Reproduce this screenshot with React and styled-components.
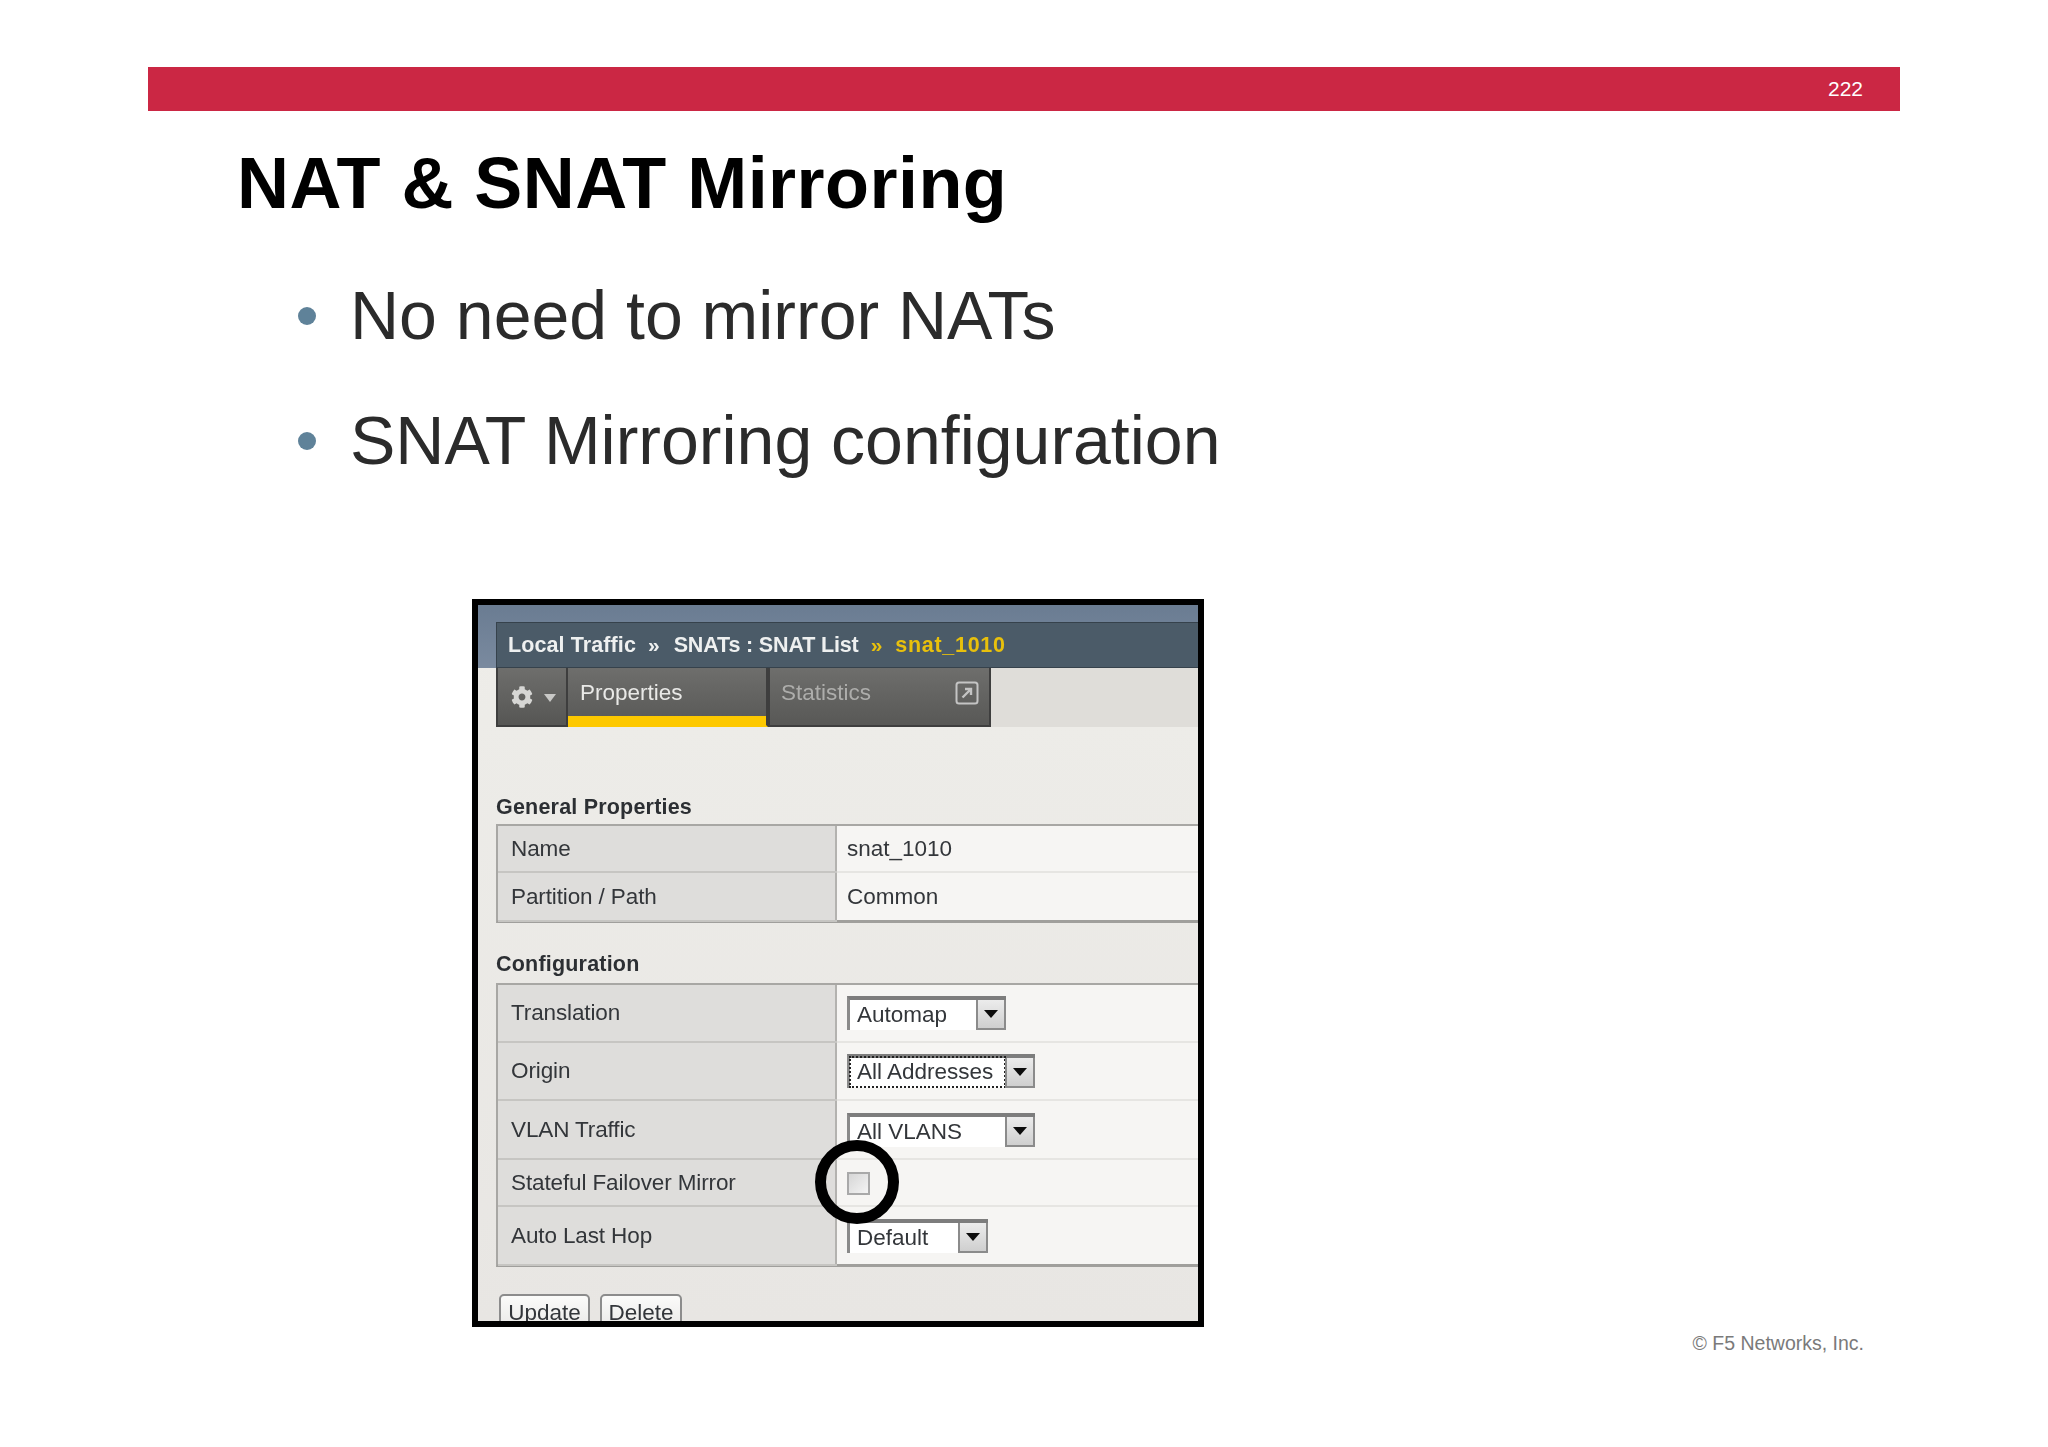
import React from "react";
import styled, { createGlobalStyle } from "styled-components";
import { FaCog } from "react-icons/fa";

const GlobalStyle = createGlobalStyle`
  html, body {
    margin: 0;
    padding: 0;
    background: #ffffff;
  }
  * {
    box-sizing: border-box;
  }
`;

const generalRows = [
  { label: "Name", value: "snat_1010", height: 47 },
  { label: "Partition / Path", value: "Common", height: 47 },
];

function App() {
  return (
    <Slide>
      <GlobalStyle />
      <TopBar>222</TopBar>
      <Title>NAT &amp; SNAT Mirroring</Title>
      <BulletList>
        <li>No need to mirror NATs</li>
        <li>SNAT Mirroring configuration</li>
      </BulletList>
      <BottomRow>
        <Panel>
          <TopBand>
            <Breadcrumb>
              <Crumb $spacing={0.1}>Local Traffic</Crumb>
              <Sep>»</Sep>
              <Crumb $spacing={-0.15}>SNATs : SNAT List</Crumb>
              <Current>
                <Sep>»</Sep>
                <Crumb $spacing={0.7}>snat_1010</Crumb>
              </Current>
            </Breadcrumb>
          </TopBand>
          <TabRow>
            <GearTab>
              <FaCog size={22} color="#d6d6d4" />
              <Caret />
            </GearTab>
            <Tab $width={200} $active>
              Properties
            </Tab>
            <Tab $width={223}>
              Statistics
              <svg width="24" height="24" viewBox="0 0 24 24" fill="none">
                <rect x="1.5" y="1.5" width="21" height="21" rx="2.5" stroke="#c4c4c4" strokeWidth="2" />
                <path d="M7.5 16.5 L15 9 M10 8 H16 V14" stroke="#c4c4c4" strokeWidth="2.4" />
              </svg>
            </Tab>
          </TabRow>

          <SectionTitle $top={68} $bottom={5}>
            General Properties
          </SectionTitle>
          <PropTable>
            {generalRows.map((row) => (
              <Row key={row.label} $height={row.height}>
                <Label>{row.label}</Label>
                <Value>{row.value}</Value>
              </Row>
            ))}
          </PropTable>

          <SectionTitle $top={29} $bottom={7}>
            Configuration
          </SectionTitle>
          <PropTable>
            <Row $height={58}>
              <Label>Translation</Label>
              <Value>
                <Select $width={159}>
                  <SelectText>Automap</SelectText>
                  <ArrowButton />
                </Select>
              </Value>
            </Row>
            <Row $height={58}>
              <Label>Origin</Label>
              <Value>
                <Select $width={188}>
                  <SelectText $focused>All Addresses</SelectText>
                  <ArrowButton />
                </Select>
              </Value>
            </Row>
            <Row $height={59}>
              <Label>VLAN Traffic</Label>
              <Value>
                <Select $width={188}>
                  <SelectText>All VLANS</SelectText>
                  <ArrowButton />
                </Select>
              </Value>
            </Row>
            <Row $height={47}>
              <Label>Stateful Failover Mirror</Label>
              <Value>
                <CheckWrap>
                  <CheckBox />
                  <Ring />
                </CheckWrap>
              </Value>
            </Row>
            <Row $height={57}>
              <Label>Auto Last Hop</Label>
              <Value>
                <Select $width={141}>
                  <SelectText>Default</SelectText>
                  <ArrowButton />
                </Select>
              </Value>
            </Row>
          </PropTable>

          <ButtonRow>
            <Button $width={91}>Update</Button>
            <Button $width={82}>Delete</Button>
          </ButtonRow>
        </Panel>
        <Footer>© F5 Networks, Inc.</Footer>
      </BottomRow>
    </Slide>
  );
}

export default App;

const Slide = styled.div`
  width: 2048px;
  height: 1447px;
  padding-top: 67px;
  overflow: hidden;
  background: #ffffff;
  font-family: "Liberation Sans", Arial, sans-serif;
`;

const TopBar = styled.div`
  width: 1752px;
  height: 44px;
  margin-left: 148px;
  padding-right: 37px;
  display: flex;
  align-items: center;
  justify-content: flex-end;
  background: #cb2744;
  color: #ffffff;
  font-size: 21px;
`;

const Title = styled.h1`
  margin: 32px 0 0 237px;
  font-size: 72px;
  line-height: 80px;
  letter-spacing: 0.45px;
  font-weight: 700;
  color: #000000;
`;

const BulletList = styled.ul`
  margin: 30px 0 0;
  padding: 0 0 0 298px;
  list-style: none;
  font-size: 68px;
  line-height: 125px;
  color: #2b2b2b;

  li {
    display: flex;
    align-items: center;
    gap: 34px;
  }
  li::before {
    content: "";
    width: 18px;
    height: 18px;
    border-radius: 50%;
    background: #5f8299;
  }
`;

const BottomRow = styled.div`
  height: 756px;
  margin-top: 96px;
  padding: 0 184px 0 472px;
  display: flex;
`;

const Panel = styled.div`
  width: 732px;
  height: 728px;
  flex-shrink: 0;
  border: 6px solid #000000;
  overflow: hidden;
  background: linear-gradient(#eeede9, #e8e6e3);
  filter: blur(0.45px);
  color: #33363a;
  font-size: 22.5px;
`;

const TopBand = styled.div`
  height: 63px;
  padding: 17px 0 0 18px;
  background: linear-gradient(#6a7c92, #7a8a9f);
`;

const Breadcrumb = styled.div`
  height: 46px;
  padding-left: 11px;
  display: flex;
  align-items: center;
  gap: 12px;
  background: #4b5b68;
  border: 1.5px solid #36424c;
  border-right: 0;
  color: #eef0f0;
  font-weight: 700;
  font-size: 21.5px;
`;

const Crumb = styled.span`
  letter-spacing: ${(p) => p.$spacing}px;
`;

const Sep = styled.span`
  font-size: 21px;
  letter-spacing: 2px;
`;

const Current = styled.span`
  display: flex;
  gap: 11px;
  color: #e8c00c;
`;

const TabRow = styled.div`
  height: 59px;
  margin-left: 18px;
  display: flex;
  background: #dfddd9;
`;

const GearTab = styled.div`
  width: 72px;
  padding-left: 13px;
  display: flex;
  align-items: center;
  gap: 11px;
  background: linear-gradient(#6e6e6c, #565654);
  border: 2px solid #3e3e3e;
  border-top: 0;
`;

const Caret = styled.span`
  width: 0;
  height: 0;
  margin-top: 2px;
  border-left: 6.5px solid transparent;
  border-right: 6.5px solid transparent;
  border-top: 8px solid #c8c8c6;
`;

const Tab = styled.div`
  width: ${(p) => p.$width}px;
  padding: 0 10px 7px ${(p) => (p.$active ? 12 : 11)}px;
  display: flex;
  align-items: center;
  justify-content: space-between;
  background: linear-gradient(#6e6e6c, #585856);
  border: 2px solid #3e3e3e;
  border-top: 0;
  border-left-width: ${(p) => (p.$active ? 0 : 2)}px;
  border-bottom-color: ${(p) => (p.$active ? "#fdc800" : "#3e3e3e")};
  box-shadow: ${(p) => (p.$active ? "inset 0 -9px 0 #fdc800" : "none")};
  color: ${(p) => (p.$active ? "#e9e9e7" : "#adadab")};
  font-size: 22.5px;
`;

const SectionTitle = styled.div`
  height: 24px;
  margin: ${(p) => p.$top}px 0 ${(p) => p.$bottom}px 18px;
  line-height: 24px;
  font-weight: 700;
  font-size: 21.5px;
  letter-spacing: 0.2px;
  color: #2c2f33;
`;

const PropTable = styled.div`
  margin-left: 18px;
  border-top: 2px solid #a8a7a4;
  border-bottom: 3px solid #a09f9c;
  border-left: 2px solid #a8a7a4;
`;

const Row = styled.div`
  height: ${(p) => p.$height}px;
  display: grid;
  grid-template-columns: 339px 1fr;
  border-bottom: 2px solid #e6e5e2;

  &:last-child {
    border-bottom: 0;
  }
`;

const Label = styled.div`
  padding-left: 13px;
  display: flex;
  align-items: center;
  background: #dedddb;
  border-right: 2px solid #b3b2af;
  box-shadow: 0 2px 0 #c6c5c2;
  letter-spacing: -0.12px;
`;

const Value = styled.div`
  padding-left: 10px;
  display: flex;
  align-items: center;
  background: #f6f5f3;
`;

const Select = styled.div`
  width: ${(p) => p.$width}px;
  height: 34px;
  display: flex;
  justify-content: space-between;
  background: #ffffff;
  border-top: 4px solid #7d7d7d;
  border-left: 3px solid #8a8a8a;
`;

const SelectText = styled.div`
  flex: 1;
  margin: ${(p) => (p.$focused ? "0 1px 2px 1px" : "0")};
  padding-left: ${(p) => (p.$focused ? 6 : 7)}px;
  display: flex;
  align-items: center;
  white-space: nowrap;
  outline: ${(p) => (p.$focused ? "2px dotted #222222" : "none")};
`;

const ArrowButton = styled.div`
  width: 30px;
  flex-shrink: 0;
  display: flex;
  align-items: center;
  justify-content: center;
  background: linear-gradient(#ececec, #cfcfcf);
  border: 2px solid #8b8b8b;
  border-top: 0;

  &::after {
    content: "";
    width: 0;
    height: 0;
    border-left: 7px solid transparent;
    border-right: 7px solid transparent;
    border-top: 8px solid #0c0c0c;
  }
`;

const CheckWrap = styled.div`
  position: relative;
  margin-top: 1px;
`;

const CheckBox = styled.div`
  width: 23px;
  height: 23px;
  background: linear-gradient(135deg, #d6d6d6, #f4f4f4);
  border: 2px solid #a9a9a9;
`;

/* hand drawn annotation over the screenshot */
const Ring = styled.div`
  position: absolute;
  left: -32px;
  top: -32px;
  width: 84px;
  height: 84px;
  border: 11px solid #000000;
  border-radius: 50%;
`;

const ButtonRow = styled.div`
  margin: 27px 0 0 21px;
  display: flex;
  gap: 10px;
`;

const Button = styled.div`
  width: ${(p) => p.$width}px;
  height: 38px;
  display: flex;
  align-items: center;
  justify-content: center;
  background: linear-gradient(#fbfbfa, #e9e8e6);
  border: 2px solid #8c8c8c;
  border-radius: 5px;
`;

const Footer = styled.div`
  margin-left: auto;
  align-self: flex-end;
  line-height: 24px;
  font-size: 19.5px;
  color: #7a7a7a;
  white-space: nowrap;
`;
